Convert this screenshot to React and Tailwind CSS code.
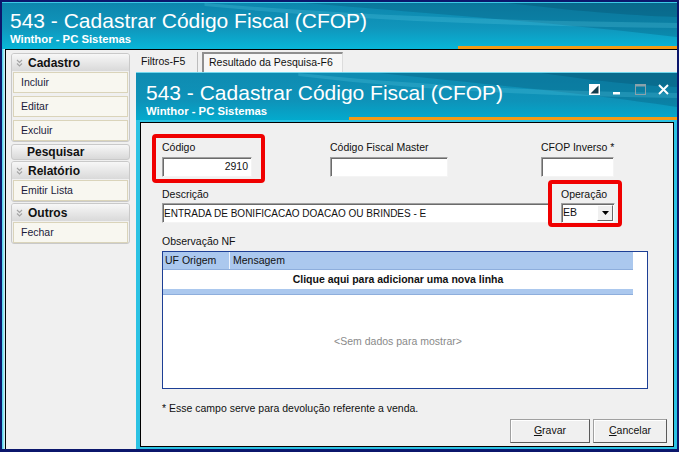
import React from 'react';

function Chevrons() {
  return (
    <svg width="7" height="8" viewBox="0 0 7 8" className="shrink-0">
      <path d="M1 1 L3.5 3.5 L6 1 M1 4.5 L3.5 7 L6 4.5" fill="none" stroke="#a4a4a4" strokeWidth="1.1" />
    </svg>
  );
}

function Item({ children }) {
  return (
    <div className="h-[21px] border border-[#dad4ba] bg-[#f8f7f0] pl-[7px] flex items-center text-[10.5px] text-[#1b1b3b]">
      {children}
    </div>
  );
}

function Group({ title, items, className = '' }) {
  return (
    <div className={`w-[119px] rounded-[3px] border border-[#c9c9c9] ${className}`}>
      <div className="h-[17px] flex items-center gap-[5px] pl-[4px] rounded-t-[2px] bg-[linear-gradient(#f7f7f7,#d9d9d9)]">
        <Chevrons />
        <span className="text-[12px] leading-[14px] font-bold text-[#111]">{title}</span>
      </div>
      <div className="flex flex-col gap-[3px] px-[1px] pt-[1px]">
        {items.map((i) => (
          <Item key={i}>{i}</Item>
        ))}
      </div>
    </div>
  );
}

function Label({ children }) {
  return <div className="text-[10.5px] leading-[13px] text-[#111] whitespace-nowrap">{children}</div>;
}

const inputCls =
  'h-[20px] bg-white border border-t-[#a0a0a0] border-l-[#a0a0a0] border-b-[#f4f4f4] border-r-[#f4f4f4] shadow-[inset_1px_1px_0_#6b6b6b] flex items-center text-[10.5px] text-[#111]';

function Streaks({ w }) {
  return (
    <svg className="absolute inset-0" width={w} height="47" viewBox={`0 0 ${w} 47`} preserveAspectRatio="none">
      <path d={`M${w * 0.45} 0 L${w} 0 L${w} 34 C${w * 0.85} 22 ${w * 0.7} 14 ${w * 0.45} 0Z`} fill="#03506f" fillOpacity="0.28" />
      <path d={`M${w * 0.3} 0 C${w * 0.55} 14 ${w * 0.78} 18 ${w} 20 L${w} 25 C${w * 0.78} 23 ${w * 0.55} 19 ${w * 0.3} 3Z`} fill="#6ad6ee" fillOpacity="0.22" />
      <path d={`M${w * 0.75} 0 C${w * 0.85} 8 ${w * 0.92} 12 ${w} 14 L${w} 0Z`} fill="#02405a" fillOpacity="0.25" />
    </svg>
  );
}

function WinIcons() {
  return (
    <div className="absolute top-[11px] right-[8px] flex gap-[12px]">
      <svg width="11" height="11" viewBox="0 0 11 11">
        <rect x="0.75" y="0.75" width="9.5" height="9.5" fill="#123c4c" stroke="#fff" strokeWidth="1.5" />
        <polygon points="0,0 11,0 0,11" fill="#fff" />
      </svg>
      <svg width="11" height="11" viewBox="0 0 11 11">
        <rect x="1" y="8" width="7" height="2.5" fill="#fff" />
      </svg>
      <svg width="11" height="11" viewBox="0 0 11 11">
        <rect x="0.5" y="0.5" width="10" height="10" fill="none" stroke="#8aa2ab" strokeWidth="1" />
        <rect x="0.5" y="0.5" width="10" height="2" fill="#8aa2ab" />
      </svg>
      <svg width="11" height="11" viewBox="0 0 11 11">
        <path d="M1 1 L10 10 M10 1 L1 10" stroke="#fff" strokeWidth="2" />
      </svg>
    </div>
  );
}

export default function App() {
  return (
    <div className="w-[679px] h-[452px] overflow-hidden bg-[#0b176c] pt-[2px] px-[2px] pb-[3px] font-['Liberation_Sans',Arial,sans-serif]">
      <div className="flex h-full flex-col">
        {/* main window title */}
        <div className="relative h-[47px] shrink-0 overflow-hidden border-t border-[#3cc9e6] bg-[linear-gradient(180deg,#0d86ad_0%,#1096bc_55%,#08b6d8_100%)]">
          <Streaks w={675} />
          <div className="relative pl-[8px] pt-[6px] text-white">
            <div className="text-[21px] leading-[24px]">543 - Cadastrar Código Fiscal (CFOP)</div>
            <div className="text-[11.3px] leading-[13px] font-bold">Winthor - PC Sistemas</div>
          </div>
          <div className="absolute bottom-0 left-[456px] right-0 h-[3px] bg-[#f39a16]" />
        </div>

        {/* body */}
        <div className="flex flex-1 min-h-0">
          <div className="w-[3px] bg-[linear-gradient(90deg,#3fd0ec,#e6f3f7)]" />
          <div className="flex flex-1 min-w-0 border-l border-t border-black">
            {/* sidebar */}
            <div className="w-[130px] shrink-0 bg-[#f0f0f0] pt-[3px] pl-[5px] flex flex-col">
              <Group title="Cadastro" items={['Incluir', 'Editar', 'Excluir']} />
              <div className="mt-[2px] w-[119px] h-[16px] rounded-[3px] border border-[#c9c9c9] bg-[linear-gradient(#f7f7f7,#d9d9d9)] pl-[15px] flex items-center">
                <span className="text-[12px] leading-[14px] font-bold text-[#111]">Pesquisar</span>
              </div>
              <Group title="Relatório" items={['Emitir Lista']} className="mt-[1px]" />
              <Group title="Outros" items={['Fechar']} className="mt-[1px]" />
            </div>

            {/* main */}
            <div className="flex flex-1 min-w-0 flex-col">
              <div className="h-[22px] shrink-0 bg-[#f0f0f0] flex items-end pl-[5px] text-[10.5px] text-[#111]">
                <div className="h-[20px] w-[56px] flex items-center">Filtros-F5</div>
                <div className="h-[20px] w-px bg-[#bcbcbc]" />
                <div className="ml-[4px] h-[20px] w-[141px] border-l-2 border-t-2 border-[#8f8f8f] border-r border-r-[#dcdcdc] bg-[#f7f7f7] flex items-center pl-[5px]">
                  Resultado da Pesquisa-F6
                </div>
              </div>

              {/* inner window */}
              <div className="flex flex-1 min-h-0 flex-col bg-[#2bc2e3] border-t border-[#72d8ee]">
                <div className="relative h-[47px] shrink-0 overflow-hidden bg-[linear-gradient(180deg,#0f8bb1_0%,#0e93b9_60%,#03aacd_100%)]">
                  <Streaks w={541} />
                  <div className="relative pl-[10px] pt-[8px] text-white">
                    <div className="text-[21px] leading-[24px]">543 - Cadastrar Código Fiscal (CFOP)</div>
                    <div className="text-[11.3px] leading-[13px] font-bold">Winthor - PC Sistemas</div>
                  </div>
                  <WinIcons />
                  <div className="absolute bottom-0 left-[213px] right-0 h-[3px] bg-[#f39a16]" />
                </div>

                <div className="flex flex-1 min-h-0 pl-[4px] pr-[3px] pt-[2px] pb-[2px]">
                  <div className="relative flex flex-1 flex-col border border-black bg-[#f0f0f0] pl-[21px] pt-[18px]">
                    {/* row 1 */}
                    <div className="flex">
                      <div className="w-[90px]">
                        <Label>Código</Label>
                        <div className={`${inputCls} mt-[3px] w-[90px] justify-end pr-[3px]`}>2910</div>
                      </div>
                      <div className="ml-[78px] w-[118px]">
                        <Label>Código Fiscal Master</Label>
                        <div className={`${inputCls} mt-[3px] w-[118px]`} />
                      </div>
                      <div className="ml-[93px] w-[73px]">
                        <Label>CFOP Inverso *</Label>
                        <div className={`${inputCls} mt-[3px] w-[73px]`} />
                      </div>
                    </div>

                    {/* row 2 */}
                    <div className="flex mt-[11px]">
                      <div className="w-[389px]">
                        <Label>Descrição</Label>
                        <div className={`${inputCls} mt-[2px] w-[389px] pl-[1px] text-[10px] whitespace-nowrap`}>
                          ENTRADA DE BONIFICACAO DOACAO OU BRINDES - E
                        </div>
                      </div>
                      <div className="ml-[10px] w-[54px]">
                        <Label>Operação</Label>
                        <div className={`${inputCls} mt-[2px] w-[54px] pl-[1px] justify-between pr-[1px]`}>
                          <span>EB</span>
                          <div className="w-[16px] h-[16px] bg-[#f0f0f0] border border-t-white border-l-white border-b-[#696969] border-r-[#696969] flex items-center justify-center">
                            <svg width="7" height="4" viewBox="0 0 7 4">
                              <polygon points="0,0 7,0 3.5,4" fill="#000" />
                            </svg>
                          </div>
                        </div>
                      </div>
                    </div>

                    {/* row 3 */}
                    <div className="mt-[12px]">
                      <Label>Observação NF</Label>
                    </div>
                    <div className="mt-[3px] w-[486px] h-[138px] border border-[#1d3f95] bg-white flex flex-col text-[10.5px] text-[#111]">
                      <div className="w-[470px] h-[18px] shrink-0 bg-[#abc8ee] border-b border-[#8eaedc] flex leading-[17px]">
                        <div className="w-[67px] pl-[2px] border-r border-r-[#eef4fd]">UF Origem</div>
                        <div className="pl-[3px]">Mensagem</div>
                      </div>
                      <div className="w-[470px] h-[19px] shrink-0 flex items-center justify-center font-bold">
                        Clique aqui para adicionar uma nova linha
                      </div>
                      <div className="w-[470px] h-[6px] shrink-0 bg-[#abc8ee] border-b border-[#8eaedc]" />
                      <div className="w-[470px] flex-1 flex items-center justify-center text-[#8a8a8a]">
                        &lt;Sem dados para mostrar&gt;
                      </div>
                    </div>

                    <div className="mt-[13px]">
                      <Label>* Esse campo serve para devolução referente a venda.</Label>
                    </div>

                    <div className="mt-[4px] flex justify-end gap-[3px] pr-[6px]">
                      <button className="w-[80px] h-[24px] bg-[#f0f0f0] border border-[#a0a0a0] border-b-[#5a5a5a] border-r-[#5a5a5a] shadow-[inset_1px_1px_0_#fff] text-[10.5px] text-[#111]">
                        <span className="underline">G</span>ravar
                      </button>
                      <button className="w-[74px] h-[24px] bg-[#f0f0f0] border border-[#a0a0a0] border-b-[#5a5a5a] border-r-[#5a5a5a] shadow-[inset_1px_1px_0_#fff] text-[10.5px] text-[#111]">
                        <span className="underline">C</span>ancelar
                      </button>
                    </div>

                    {/* highlight boxes */}
                    <div className="absolute left-[11px] top-[11px] w-[113px] h-[49px] border-4 border-[#f00000] rounded-[4px]" />
                    <div className="absolute left-[407px] top-[57px] w-[74px] h-[47px] border-4 border-[#f00000] rounded-[4px]" />
                  </div>
                </div>
              </div>
            </div>
          </div>
        </div>
      </div>
    </div>
  );
}
